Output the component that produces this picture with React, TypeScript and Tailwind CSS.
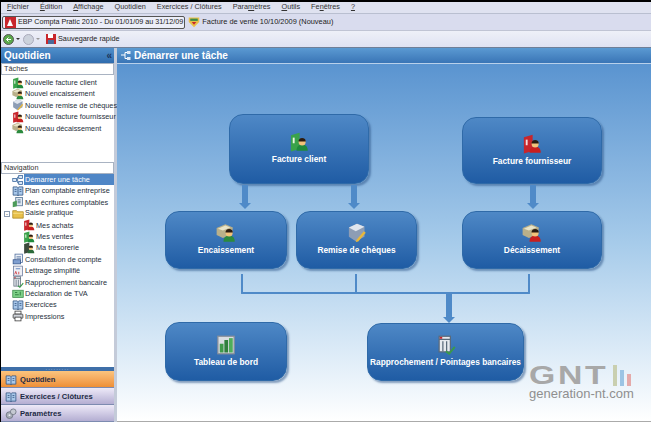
import type { ReactNode } from "react";

const UI = "font-['Liberation_Sans',Arial,sans-serif]";

type IconKind = "green" | "red" | "cash" | "cashRed" | "cheque" | "flow" | "book" | "ledger" | "folder" | "dark" | "consult" | "lettrage" | "rappro" | "tva" | "print" | "gear" | "chart" | "shield";

function Person({ x, y, shirt }: { x: number; y: number; shirt: string }) {
  return (
    <g>
      <path d={`M${x - 4.500} ${y + 9}c0-4 2.500-5 4.500-5s4.500 1 4.500 5z`} fill={shirt} />
      <circle cx={x} cy={y + 2} r="2.800" fill="#f3c27a" />
      <path d={`M${x - 2.900} ${y + 1.600}a2.900 2.900 0 0 1 5.800 0z`} fill="#2a1a10" />
    </g>
  );
}

function Icon({ kind, size = 12 }: { kind: IconKind; size?: number }) {
  const content: Record<IconKind, ReactNode> = {
    green: (
      <>
        <path d="M1.500 2.500l7-2v13l-7 2z" fill="#3aa24a" />
        <path d="M3 4.500h1.500v4.500H3z" fill="#e8f5e0" />
        <Person x={10.500} y={6} shirt="#1f8a3c" />
      </>
    ),
    red: (
      <>
        <path d="M1.500 2.500l7-2v13l-7 2z" fill="#c8262c" />
        <path d="M3 4.500h1.500v4.500H3z" fill="#f5dcdc" />
        <Person x={10.500} y={6} shirt="#c81e1e" />
      </>
    ),
    dark: (
      <>
        <path d="M1.500 2.500l7-2v13l-7 2z" fill="#3c4a3c" />
        <Person x={10.500} y={6} shirt="#2b6a3a" />
      </>
    ),
    cash: (
      <>
        <path d="M.500 4l7-3 6 2.500-1 6-7 2.500-5-2.500z" fill="#b9b08a" />
        <path d="M1.500 4.500l6-2.500 4 1.500-6 2.500z" fill="#e9e4c8" />
        <Person x={10.500} y={6} shirt="#2b8a3e" />
      </>
    ),
    cashRed: (
      <>
        <path d="M.500 4l7-3 6 2.500-1 6-7 2.500-5-2.500z" fill="#b9b08a" />
        <path d="M1.500 4.500l6-2.500 4 1.500-6 2.500z" fill="#e9e4c8" />
        <Person x={10.500} y={6} shirt="#c81e1e" />
      </>
    ),
    cheque: (
      <>
        <path d="M1.500 3.500l6.500-3 6 2.500v8l-7 3.500-5.500-3.500z" fill="#8d9db5" />
        <path d="M1.500 3.500l5.500 3 7-3.500-6-2.500z" fill="#dfe5ee" />
        <path d="M7.500 13.500l6-7 1.500 1.200-6 7-2 .5z" fill="#e8b83a" />
      </>
    ),
    flow: (
      <>
        <rect x="1" y="6" width="5" height="4" fill="#dbe8f7" stroke="#2f5f98" />
        <rect x="9" y="2" width="5" height="4" fill="#dbe8f7" stroke="#2f5f98" />
        <rect x="9" y="10" width="5" height="4" fill="#dbe8f7" stroke="#2f5f98" />
        <path d="M6 8h1.500V4H9M7.500 8v4H9" fill="none" stroke="#2f5f98" />
      </>
    ),
    book: (
      <>
        <path d="M1.500 2.500h5.500l1 1 1-1h5.500v11H9l-1 1-1-1H1.500z" fill="#a9c8ea" stroke="#2c4f7c" />
        <path d="M8 3.500v11M3.500 6h2.500M3.500 8.500h2.500M10 6h2.500M10 8.500h2.500" stroke="#2c4f7c" />
      </>
    ),
    ledger: (
      <>
        <rect x="5" y="2" width="9" height="11" fill="#dfe8f2" stroke="#4a6a8a" />
        <path d="M1 8l5.500-2v7.500L1 15z" fill="#4c9a58" />
        <path d="M7.500 5h4M7.500 7h4M7.500 9h4" stroke="#4a6a8a" />
      </>
    ),
    folder: (
      <>
        <path d="M1 3.500h5l1.500 1.500H15v8.500H1z" fill="#e8c04a" stroke="#a98620" />
        <path d="M1.500 7h13" stroke="#f8e79a" />
      </>
    ),
    consult: (
      <>
        <rect x="4" y="1.500" width="10" height="11" fill="#eef2f8" stroke="#4a6a9a" />
        <path d="M6 5h6M6 7h6" stroke="#4a6a9a" />
        <rect x="1.500" y="9" width="10" height="5.500" fill="#7f9fd0" stroke="#33548a" />
      </>
    ),
    lettrage: (
      <>
        <rect x="2" y="1.500" width="12" height="13" fill="#eef0f6" stroke="#6a7a9a" />
        <path d="M3.500 12.500l1.500-4 1.500 4M9 9v3.500" stroke="#c8262c" fill="none" />
        <path d="M5 5h6" stroke="#3a6ab0" />
      </>
    ),
    rappro: (
      <>
        <rect x="2.500" y="1" width="9" height="12.500" fill="#e6e9ee" stroke="#5a6a7a" />
        <path d="M2.500 3.500h9M5.500 5v8M8.500 5v8" stroke="#5a6a7a" />
        <path d="M3 1.500h2v1.500H3z" fill="#c8262c" />
        <path d="M8 13l2.500 2L15 9.500" stroke="#3a9a4a" fill="none" strokeWidth="1.500" />
      </>
    ),
    chart: (
      <>
        <rect x="1.500" y="1" width="13" height="14" fill="#d9dde2" stroke="#8a9099" />
        <rect x="3" y="7" width="3" height="7" fill="#3f9a4a" />
        <rect x="6.700" y="4" width="3" height="10" fill="#2f7f3c" />
        <rect x="10.400" y="2.500" width="3" height="11.500" fill="#4fae5a" />
      </>
    ),
    tva: (
      <>
        <rect x="1" y="3" width="14" height="9.500" fill="#7ccf86" stroke="#3a8a4a" />
        <path d="M4 6h3M4 9h5M11 5v5" stroke="#1f6a2f" />
      </>
    ),
    print: (
      <>
        <rect x="4" y="1.500" width="8" height="4" fill="#fff" stroke="#333" />
        <rect x="1.500" y="5.500" width="13" height="5.500" rx="1" fill="#d0d4da" stroke="#333" />
        <rect x="4" y="9.500" width="8" height="5" fill="#fff" stroke="#333" />
      </>
    ),
    gear: (
      <>
        <circle cx="6" cy="9.500" r="4.500" fill="#a8adb8" stroke="#666c78" />
        <circle cx="11" cy="5" r="3.800" fill="#c5c9d2" stroke="#666c78" />
        <circle cx="6" cy="9.500" r="1.300" fill="#eef0f4" />
      </>
    ),
    shield: (
      <>
        <path d="M1 2h14v6l-7 7-7-7z" fill="#e8c04a" />
        <path d="M3 3.500h10v3H3z" fill="#3a8a4a" />
        <path d="M5 8h6l-3 3.500z" fill="#c8262c" />
      </>
    ),
  };
  return (
    <svg width={size} height={size} viewBox="0 0 16 16" className="shrink-0">
      {content[kind]}
    </svg>
  );
}

function Mnemonic({ first, rest }: { first: string; rest: string }) {
  return (
    <span>
      <span className="underline">{first}</span>
      {rest}
    </span>
  );
}

function Row({ icon, label, active, indent }: { icon: IconKind; label: string; active?: boolean; indent?: boolean }) {
  return (
    <div className={`flex h-[11.4px] items-center text-[7.3px] leading-none whitespace-nowrap ${indent ? "pl-[22px]" : "pl-[11px]"}`}>
      <Icon kind={icon} />
      <span className={active ? "flex-1 bg-[#4f86c6] py-[2px] pl-[1px] text-white" : "pl-[1px] text-[#26303c]"}>{label}</span>
    </div>
  );
}

function SectionBar({ label }: { label: string }) {
  return <div className="flex h-[12px] items-center border border-[#a9b3c2] bg-white pl-[2px] text-[7.3px] text-[#333]">{label}</div>;
}

function Pane({ icon, label, className }: { icon: IconKind; label: string; className: string }) {
  return (
    <div className={`flex h-[17px] items-center gap-[3px] border-b border-[#7d8bb0] pt-[1px] pl-[4px] text-[7.6px] font-bold text-[#1d2a44] ${className}`}>
      <Icon kind={icon} />
      {label}
    </div>
  );
}

function Node({ icon, label, box, text = "text-[8.4px]" }: { icon: IconKind; label: string; box: string; text?: string }) {
  return (
    <div className={`absolute flex flex-col items-center justify-center rounded-[14px] border border-[#2f6aa8] bg-gradient-to-b from-[#4e88c6] to-[#1f5ca4] shadow-[2px_2px_2px_rgba(50,90,140,0.55)] ${box}`}>
      <Icon kind={icon} size={20} />
      <span className={`mt-[1px] font-bold whitespace-nowrap text-white ${text}`}>{label}</span>
    </div>
  );
}

function DownArrow({ box }: { box: string }) {
  return (
    <div className={`absolute flex flex-col items-center ${box}`}>
      <div className="w-[6px] flex-1 bg-[#4f8ac8]" />
      <div className="h-0 w-0 border-x-[6px] border-t-[6px] border-x-transparent border-t-[#4f8ac8]" />
    </div>
  );
}

export default function App() {
  return (
    <div className={`flex h-[422px] w-[651px] flex-col overflow-hidden bg-black pt-[2px] pl-[1px] ${UI}`}>
      {/* menu */}
      <div className="flex h-[12px] shrink-0 items-center gap-[11px] border-b border-[#b9bfd0] bg-[#dfe2f0] pl-[6px] text-[7.3px] text-[#333]">
        <Mnemonic first="F" rest="ichier" />
        <Mnemonic first="É" rest="dition" />
        <Mnemonic first="A" rest="ffichage" />
        <span>Quotidien</span>
        <span>Exercices / Clôtures</span>
        <span>Para<span className="underline">m</span>ètres</span>
        <Mnemonic first="O" rest="utils" />
        <span>Fe<span className="underline">n</span>êtres</span>
        <Mnemonic first="?" rest="" />
      </div>

      {/* open documents */}
      <div className="flex h-[17px] shrink-0 items-center border-b border-[#c0c4d4] bg-[#d9dcee] pl-[1px] text-[7.2px] text-[#222]">
        <div className="flex h-[13px] items-center gap-[2px] rounded-[2px] border border-[#555] bg-[#eceef8] pr-[1px] pl-[2px]">
          <svg width="11" height="11" viewBox="0 0 11 11">
            <rect width="11" height="11" fill="#c8262c" />
            <path d="M2 9l3-7 3 7z" fill="#fff" />
          </svg>
          EBP Compta Pratic 2010 - Du 01/01/09 au 31/12/09
        </div>
        <div className="ml-[3px] flex items-center gap-[2px] text-[7.4px]">
          <Icon kind="shield" />
          Facture de vente 10/10/2009 (Nouveau)
        </div>
      </div>

      {/* toolbar */}
      <div className="flex h-[16px] shrink-0 items-center bg-gradient-to-b from-[#eef0f8] to-[#dfe2f2] pl-[2px] text-[7.3px] text-[#222]">
        <svg width="11" height="11" viewBox="0 0 11 11">
          <circle cx="5.500" cy="5.500" r="5" fill="#5aa84a" stroke="#555" />
          <path d="M8 5.500H3.500M5.500 3.500l-2 2 2 2" stroke="#fff" fill="none" />
        </svg>
        <span className="ml-[2px] h-0 w-0 border-x-[2px] border-t-[2px] border-x-transparent border-t-[#333]" />
        <svg width="11" height="11" viewBox="0 0 11 11" className="ml-[3px]">
          <circle cx="5.500" cy="5.500" r="5" fill="#ccd2dc" stroke="#aab" />
        </svg>
        <span className="ml-[2px] h-0 w-0 border-x-[2px] border-t-[2px] border-x-transparent border-t-[#999]" />
        <svg width="12" height="12" viewBox="0 0 12 12" className="ml-[5px]">
          <rect x="1" y="1" width="10" height="10" fill="#c8262c" />
          <rect x="3" y="1" width="5" height="4" fill="#fff" />
          <rect x="3" y="7" width="6" height="4" fill="#4a6a9a" />
        </svg>
        <span className="ml-[1px]">Sauvegarde rapide</span>
      </div>

      <div className="flex min-h-0 flex-1 border-t border-[#6f7f98] bg-[#c4cbd9]">
        {/* left pane */}
        <aside className="flex w-[113px] flex-col bg-white">
          <div className="flex h-[15px] shrink-0 items-center justify-between bg-gradient-to-b from-[#4f8fcb] to-[#2f6cae] pr-[2px] pl-[3px] text-[10px] font-bold text-white">
            Quotidien
            <span className="text-[10px] leading-none text-[#1c3559]">«</span>
          </div>
          <SectionBar label="Tâches" />
          <div className="mt-[2px] h-[85px]">
            <Row icon="green" label="Nouvelle facture client" />
            <Row icon="cash" label="Nouvel encaissement" />
            <Row icon="cheque" label="Nouvelle remise de chèques" />
            <Row icon="red" label="Nouvelle facture fournisseur" />
            <Row icon="cash" label="Nouveau décaissement" />
          </div>
          <SectionBar label="Navigation" />
          <div className="flex-1">
            <Row icon="flow" label="Démarrer une tâche" active />
            <Row icon="book" label="Plan comptable entreprise" />
            <Row icon="ledger" label="Mes écritures comptables" />
            <div className="flex h-[11.4px] items-center pl-[3px] text-[7.3px] whitespace-nowrap text-[#26303c]">
              <span className="mr-[2px] flex h-[6px] w-[6px] items-center justify-center border border-[#8a9ab0] text-[6px] leading-none">-</span>
              <Icon kind="folder" />
              <span className="pl-[1px]">Saisie pratique</span>
            </div>
            <Row icon="red" label="Mes achats" indent />
            <Row icon="green" label="Mes ventes" indent />
            <Row icon="dark" label="Ma trésorerie" indent />
            <Row icon="consult" label="Consultation de compte" />
            <Row icon="lettrage" label="Lettrage simplifié" />
            <Row icon="rappro" label="Rapprochement bancaire" />
            <Row icon="tva" label="Déclaration de TVA" />
            <Row icon="book" label="Exercices" />
            <Row icon="print" label="Impressions" />
          </div>
          <div className="flex h-[4px] shrink-0 items-center justify-center bg-[#3f6fa8] text-[5px] leading-none tracking-[1px] text-[#c8d8ea]">·········</div>
          <Pane icon="book" label="Quotidien" className="bg-gradient-to-b from-[#fbc47e] to-[#ee8f35]" />
          <Pane icon="book" label="Exercices / Clôtures" className="bg-gradient-to-b from-[#eeeaf8] to-[#b4aed2]" />
          <Pane icon="gear" label="Paramètres" className="bg-gradient-to-b from-[#eeeaf8] to-[#b4aed2]" />
        </aside>

        {/* start page */}
        <main className="ml-[3px] flex min-w-0 flex-1 flex-col">
          <div className="flex h-[16px] shrink-0 items-center gap-[3px] border-b border-[#b8d0ea] bg-gradient-to-b from-[#5b9ad2] to-[#3a75b6] pl-[4px] text-[10px] font-bold text-white">
            <svg width="10" height="10" viewBox="0 0 10 10">
              <path d="M0 4h4M4 1.500h2M4 7.500h2M4 1.500v6" stroke="#fff" fill="none" />
              <rect x="6" y="0" width="3.500" height="3" fill="#dbe8f7" />
              <rect x="6" y="6" width="3.500" height="3" fill="#dbe8f7" />
            </svg>
            Démarrer une tâche
          </div>
          <div className="relative flex-1 border-b border-[#aaa] bg-gradient-to-b from-[#5a94d0] via-[#a6cbea] to-[#ffffff]">
            {/* canvas origin is x=117, y=64 */}
            <Node icon="green" label="Facture client" box="left-[112px] top-[50px] h-[70px] w-[140px]" />
            <Node icon="red" label="Facture fournisseur" box="left-[345px] top-[53px] h-[67px] w-[140px]" />
            <Node icon="cash" label="Encaissement" box="left-[48px] top-[147px] h-[58px] w-[122px]" />
            <Node icon="cheque" label="Remise de chèques" box="left-[179px] top-[147px] h-[58px] w-[121px]" />
            <Node icon="cashRed" label="Décaissement" box="left-[345px] top-[147px] h-[58px] w-[140px]" />
            <Node icon="chart" label="Tableau de bord" box="left-[48px] top-[258px] h-[59px] w-[122px]" />
            <Node icon="rappro" label="Rapprochement / Pointages bancaires" box="left-[250px] top-[259px] h-[58px] w-[157px]" text="text-[8.3px]" />

            <DownArrow box="left-[122px] top-[121px] h-[24px] w-[12px]" />
            <DownArrow box="left-[231px] top-[121px] h-[24px] w-[12px]" />
            <DownArrow box="left-[410px] top-[121px] h-[24px] w-[12px]" />

            {/* connector */}
            <div className="absolute top-[210px] left-[124px] h-[20px] w-[289px] rounded-b-[1px] border-x-[2px] border-b-[2px] border-[#4f8ac8]" />
            <div className="absolute top-[210px] left-[238px] h-[20px] w-[2px] bg-[#4f8ac8]" />
            <DownArrow box="left-[326px] top-[230px] h-[29px] w-[12px]" />

            {/* watermark */}
            <div className="absolute top-[300px] left-[412px] flex flex-col items-start text-[#8f8f8f]">
              <div className="flex h-[22px] items-end">
                <span className="w-[84px] origin-left scale-x-[1.3] text-[26px] leading-[22px] font-bold tracking-[2px] text-[#a8a8a8]">GNT</span>
                <div className="flex items-end gap-[3px]">
                  <span className="h-[21px] w-[4px] bg-[#c9cfb0]" />
                  <span className="h-[16px] w-[4px] bg-[#9cc4e4]" />
                  <span className="h-[12px] w-[4px] bg-[#e4aaaa]" />
                </div>
              </div>
              <span className="mt-[1px] text-[13px] leading-[14px]">generation-nt.com</span>
            </div>
          </div>
        </main>
      </div>
    </div>
  );
}
